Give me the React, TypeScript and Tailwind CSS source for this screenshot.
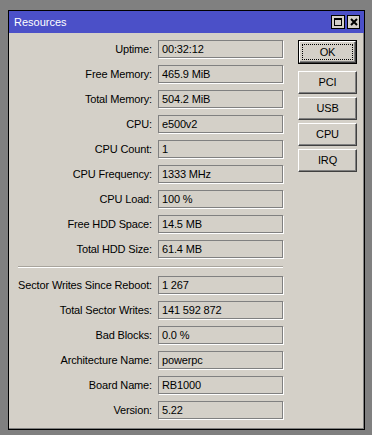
import React from "react";

const rows1: [string, string][] = [
  ["Uptime", "00:32:12"],
  ["Free Memory", "465.9 MiB"],
  ["Total Memory", "504.2 MiB"],
  ["CPU", "e500v2"],
  ["CPU Count", "1"],
  ["CPU Frequency", "1333 MHz"],
  ["CPU Load", "100 %"],
  ["Free HDD Space", "14.5 MB"],
  ["Total HDD Size", "61.4 MB"],
];
const rows2: [string, string][] = [
  ["Sector Writes Since Reboot", "1 267"],
  ["Total Sector Writes", "141 592 872"],
  ["Bad Blocks", "0.0 %"],
  ["Architecture Name", "powerpc"],
  ["Board Name", "RB1000"],
  ["Version", "5.22"],
];

function Row({ label, value }: { label: string; value: string }) {
  return (
    <div className="flex h-[25px] items-start">
      <div className="flex h-[18px] w-[144px] items-center justify-end pr-[1px] whitespace-nowrap">
        {label}:
      </div>
      <div className="ml-[5px] flex h-[18px] w-[125px] items-center border border-[#808080] pl-[3px] shadow-[1px_1px_0_#ffffff] whitespace-nowrap">
        {value}
      </div>
    </div>
  );
}

function Btn({ children, focus }: { children: React.ReactNode; focus?: boolean }) {
  if (focus) {
    return (
      <div className="h-[24px] w-[59px] border border-black">
        <div className="flex h-full w-full items-center justify-center border-t border-l border-white border-r border-b border-r-[#404040] border-b-[#404040] shadow-[inset_-1px_-1px_0_#808080] p-[2px]">
          <div className="flex h-full w-full items-center justify-center border border-dotted border-black">
            {children}
          </div>
        </div>
      </div>
    );
  }
  return (
    <div className="flex h-[23px] w-[59px] items-center justify-center border-t border-l border-white border-r border-b border-r-[#404040] border-b-[#404040] shadow-[inset_-1px_-1px_0_#808080]">
      {children}
    </div>
  );
}

export default function App() {
  return (
    <div
      className="h-[435px] w-[372px] overflow-hidden bg-[#808080] pl-[8px] pt-[10px] text-[11px] tracking-[-0.15px] text-black"
      style={{ fontFamily: '"Liberation Sans", Arial, sans-serif' }}
    >
      <div className="flex h-[420px] w-[357px] flex-col border border-black bg-[#d4d0c8]">
        <div className="flex h-[22px] items-center bg-[#4b50c8] pl-[5px] pr-[4px]">
          <span className="text-[11px] tracking-normal text-white">Resources</span>
          <div className="ml-auto flex gap-[2px]">
            <div className="flex h-[14px] w-[14px] items-center justify-center border border-black bg-[#d4d0c8]">
              <div className="h-[8px] w-[8px] border border-black border-t-2" />
            </div>
            <div className="flex h-[14px] w-[13px] items-center justify-center border border-black bg-[#d4d0c8]">
              <svg width="8" height="8" viewBox="0 0 8 8">
                <path d="M1 1 L7 7 M7 1 L1 7" stroke="black" strokeWidth="2" />
              </svg>
            </div>
          </div>
        </div>
        <div className="flex flex-1 border-r border-b border-[#808080] pt-[7px]">
          <div className="flex flex-col">
            {rows1.map(([l, v]) => (
              <Row key={l} label={l} value={v} />
            ))}
            <div className="h-[11px] pl-[9px] pt-[1px]">
              <div className="h-[2px] w-[265px] border-t border-[#a8a49c] border-b border-b-white" />
            </div>
            {rows2.map(([l, v]) => (
              <Row key={l} label={l} value={v} />
            ))}
          </div>
          <div className="ml-[15px] flex flex-col">
            <Btn focus>OK</Btn>
            <div className="mt-[7px] flex flex-col gap-[3px]">
              <Btn>PCI</Btn>
              <Btn>USB</Btn>
              <Btn>CPU</Btn>
              <Btn>IRQ</Btn>
            </div>
          </div>
        </div>
      </div>
    </div>
  );
}
